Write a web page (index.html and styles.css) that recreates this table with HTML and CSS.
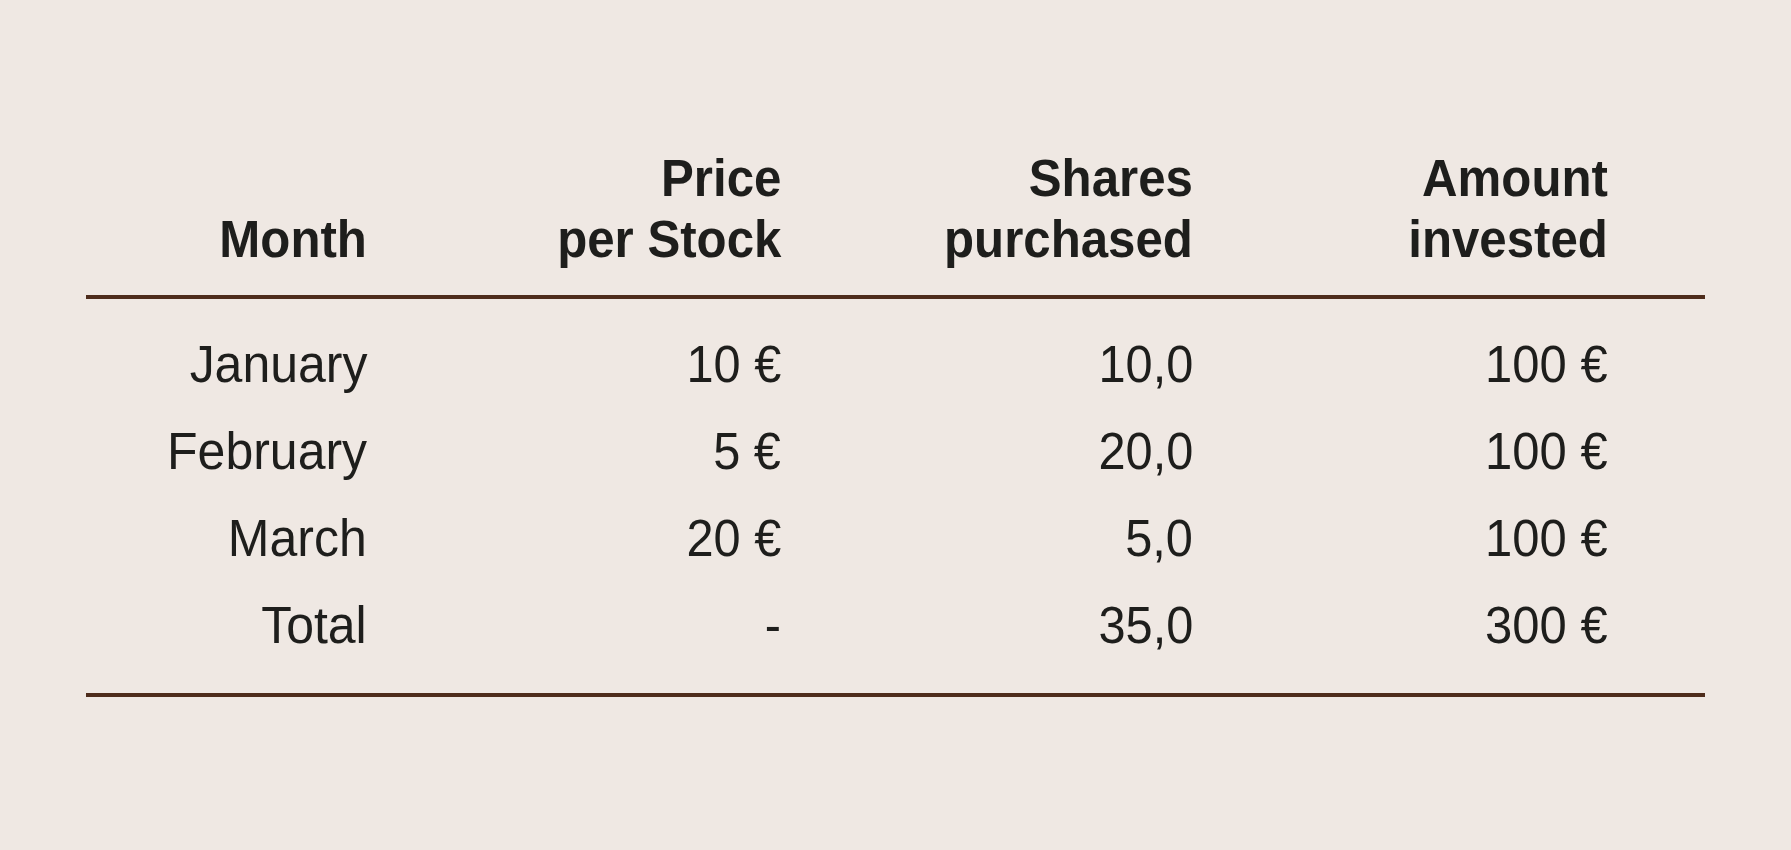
FILE: index.html
```html
<!DOCTYPE html>
<html lang="en">
<head>
<meta charset="utf-8">
<title>Dollar-cost averaging table</title>
<link rel="stylesheet" href="styles.css">
</head>
<body>
<main class="page">
  <section class="sheet">
    <div class="grid head">
      <div class="cell c1"><span class="t">Month</span></div>
      <div class="cell c2"><span class="t">Price<br>per Stock</span></div>
      <div class="cell c3"><span class="t">Shares<br>purchased</span></div>
      <div class="cell c4"><span class="t">Amount<br>invested</span></div>
    </div>
    <div class="rule"></div>
    <div class="body">
      <div class="grid row">
        <div class="cell c1"><span class="t">January</span></div>
        <div class="cell c2"><span class="t">10 €</span></div>
        <div class="cell c3"><span class="t">10,0</span></div>
        <div class="cell c4"><span class="t">100 €</span></div>
      </div>
      <div class="grid row">
        <div class="cell c1"><span class="t">February</span></div>
        <div class="cell c2"><span class="t">5 €</span></div>
        <div class="cell c3"><span class="t">20,0</span></div>
        <div class="cell c4"><span class="t">100 €</span></div>
      </div>
      <div class="grid row">
        <div class="cell c1"><span class="t">March</span></div>
        <div class="cell c2"><span class="t">20 €</span></div>
        <div class="cell c3"><span class="t">5,0</span></div>
        <div class="cell c4"><span class="t">100 €</span></div>
      </div>
      <div class="grid row">
        <div class="cell c1"><span class="t">Total</span></div>
        <div class="cell c2"><span class="t">-</span></div>
        <div class="cell c3"><span class="t">35,0</span></div>
        <div class="cell c4"><span class="t">300 €</span></div>
      </div>
    </div>
    <div class="rule"></div>
  </section>
</main>
</body>
</html>
```
FILE: styles.css
```css
html, body {
  margin: 0;
  padding: 0;
}

body {
  background: #efe8e3;
  color: #1e1e1c;
  font-family: "Liberation Sans", Arial, sans-serif;
  width: 1791px;
  height: 850px;
  overflow: hidden;
}

.page {
  padding: 148px 86px 0 86px;
}

.sheet {
  width: 1619px;
}

.grid {
  display: grid;
  grid-template-columns: 281px 414px 412px 415px;
  padding-right: 97px;
  font-size: 51px;
}

.cell {
  text-align: right;
}

.t {
  display: inline-block;
  transform-origin: right center;
}

.head {
  align-items: end;
  font-weight: 700;
  line-height: 61px;
  padding-bottom: 25px;
}

.head .t {
  transform: scaleX(0.965);
}

.rule {
  height: 4px;
  background: #4e2c1c;
}

.body {
  padding: 22px 0 24px 0;
}

.row {
  line-height: 87px;
}

.row .c1 .t {
  transform: scaleX(0.98);
}

.row .c2 .t,
.row .c3 .t {
  transform: scaleX(0.955);
}

.row .c4 .t {
  transform: scaleX(0.96);
}
```
